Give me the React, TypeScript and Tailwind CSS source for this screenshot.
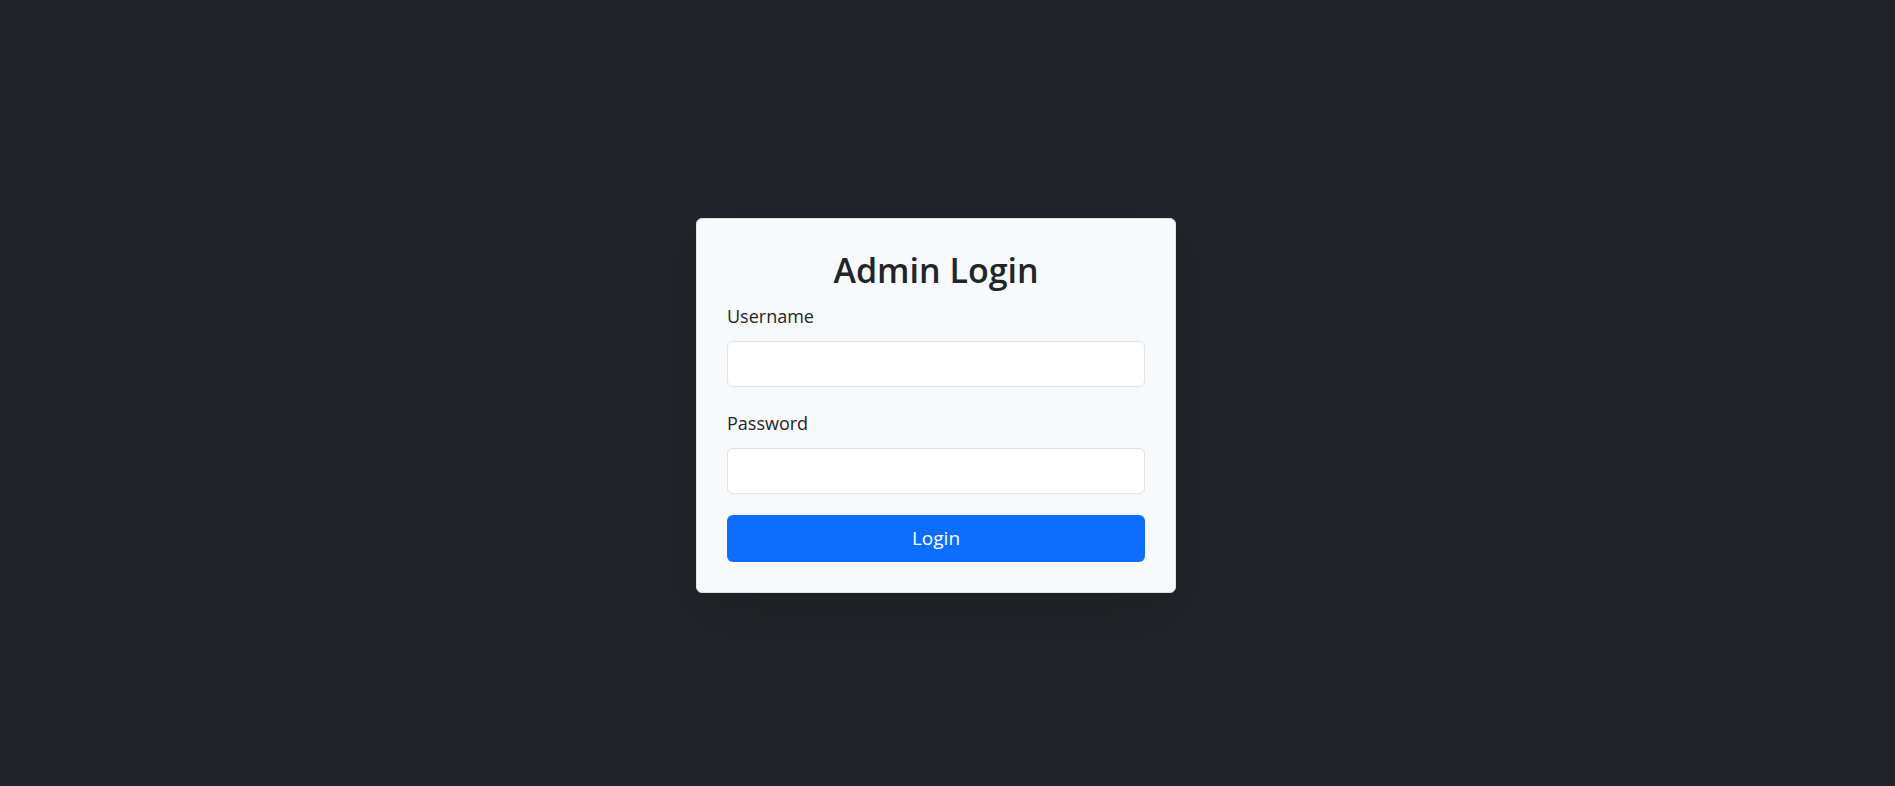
import React from "react";

export default function App() {
  return (
    <div
      className="flex h-screen w-full items-center justify-center bg-[#212529] pt-[25px] pr-[23px]"
      style={{ fontFamily: '"Open Sans", "Noto Sans", sans-serif' }}
    >
      <div className="w-[480px] rounded-[6px] border border-[#dfe1e4] bg-[#f8f9fa] px-[30px] pt-[30px] pb-[30px] shadow-[0_19px_58px_rgba(0,0,0,0.175)]">
        <h2 className="mb-[12px] text-center text-[34px] leading-[42px] font-semibold text-[#212529]">
          Admin Login
        </h2>
        <form onSubmit={(e) => e.preventDefault()}>
          <div className="mb-[23px]">
            <label className="mb-[11px] block text-[18px] leading-[27px] text-[#212529]">
              Username
            </label>
            <input
              type="text"
              className="block h-[46px] w-full rounded-[6px] border border-[#dee2e6] bg-white px-[14px] text-[18px] text-[#212529] outline-none"
            />
          </div>
          <div className="mb-[21px]">
            <label className="mb-[11px] block text-[18px] leading-[27px] text-[#212529]">
              Password
            </label>
            <input
              type="password"
              className="block h-[46px] w-full rounded-[6px] border border-[#dee2e6] bg-white px-[14px] text-[18px] text-[#212529] outline-none"
            />
          </div>
          <button
            type="submit"
            className="block h-[47px] w-full rounded-[6px] bg-[#0d6efd] text-[19px] leading-[27px] text-white"
          >
            Login
          </button>
        </form>
      </div>
    </div>
  );
}
